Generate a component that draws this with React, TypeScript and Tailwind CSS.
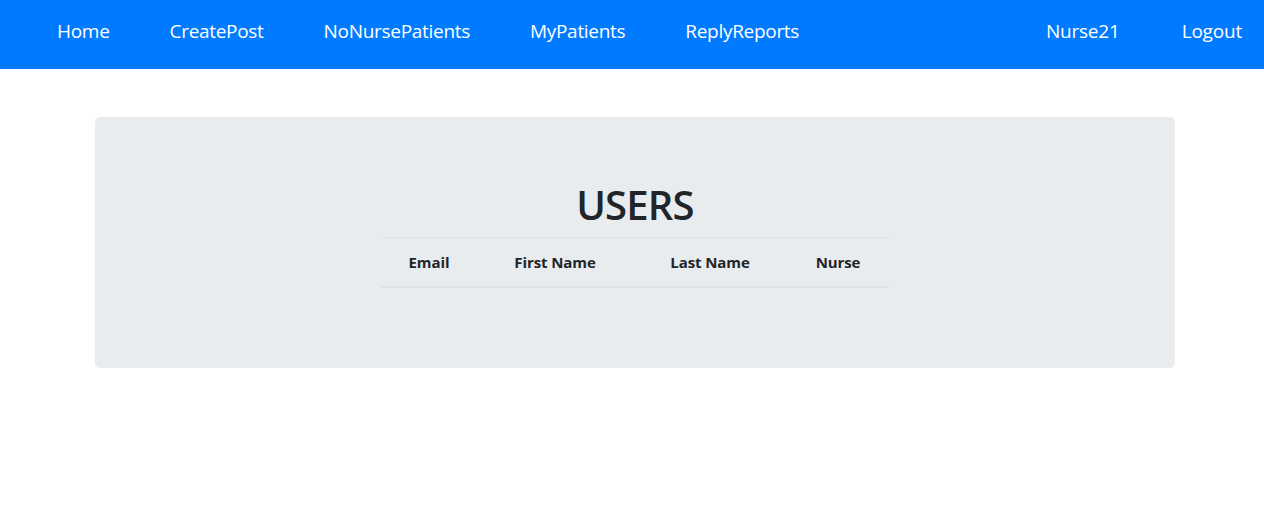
import React from 'react';

const leftLinks = ['Home', 'CreatePost', 'NoNursePatients', 'MyPatients', 'ReplyReports'];
const rightLinks = ['Nurse21', 'Logout'];

const columns = [
  { label: 'Email', width: 'w-[96px]' },
  { label: 'First Name', width: 'w-[156px]' },
  { label: 'Last Name', width: 'w-[154px]' },
  { label: 'Nurse', width: 'w-[102px]' },
];

export default function App() {
  return (
    <div className="min-h-[509px] bg-white text-[#212529] font-['Open_Sans','Noto_Sans',sans-serif]">
      <nav className="h-[69px] bg-[#007bff] flex items-center justify-between pl-[27px] pr-[22px] pb-[7px]">
        <ul className="flex items-center gap-[60px] pl-[30px] text-[19px] tracking-[-0.3px] text-white">
          {leftLinks.map((link) => (
            <li key={link}>
              <a href="#" className="hover:text-gray-200">
                {link}
              </a>
            </li>
          ))}
        </ul>
        <ul className="flex items-center gap-[62px] text-[19px] tracking-[-0.2px] text-white">
          {rightLinks.map((link) => (
            <li key={link}>
              <a href="#" className="hover:text-gray-200">
                {link}
              </a>
            </li>
          ))}
        </ul>
      </nav>

      <div className="mt-[48px] ml-[95px] w-[1080px] rounded-[5px] bg-[#e9ecef] py-[64px]">
        <h1 className="text-center text-[40px] leading-[48px] font-semibold tracking-[-0.8px] mb-[8px]">USERS</h1>
        <table className="mx-auto w-[508px] border-collapse mb-[16px]">
          <thead>
            <tr className="border-t border-[#dee2e6] border-b-2">
              {columns.map((col) => (
                <th
                  key={col.label}
                  className={`${col.width} px-[12px] py-[12px] text-[15px] leading-[24px] font-bold text-center tracking-[-0.1px]`}
                >
                  {col.label}
                </th>
              ))}
            </tr>
          </thead>
          <tbody />
        </table>
      </div>
    </div>
  );
}
